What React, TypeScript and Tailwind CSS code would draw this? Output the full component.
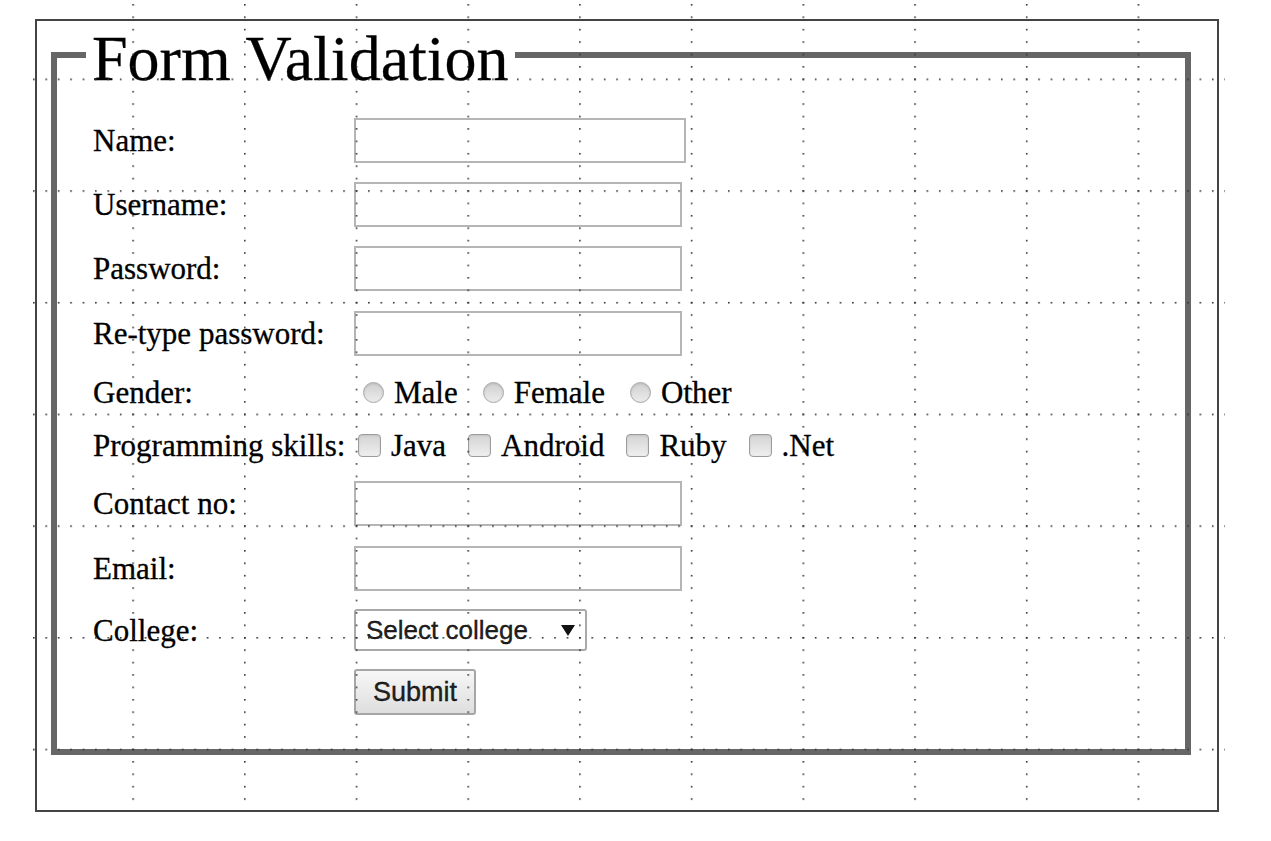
import type { ReactNode } from "react";

function Row({ label, h, children }: { label?: string; h: string; children: ReactNode }) {
  return (
    <div className={`flex items-center ${h}`}>
      <div className="w-[261px] shrink-0 text-[31px] leading-[35px]">{label}</div>
      <div className="flex items-center">{children}</div>
    </div>
  );
}

function TextBox({ wide }: { wide?: boolean }) {
  return (
    <input
      type="text"
      className={`${wide ? "w-[332px]" : "w-[328px]"} h-[45px] border-2 border-[#b5b5b5] bg-white outline-none`}
    />
  );
}

function Radio({ label, first }: { label: string; first?: boolean }) {
  return (
    <label className={`flex items-center ${first ? "ml-[9px]" : "ml-[25px]"}`}>
      <input
        type="radio"
        name="gender"
        className="appearance-none w-[21px] h-[21px] rounded-full border border-[#a8a8a8] bg-gradient-to-b from-[#cfcfcf] to-[#ececec] shadow-[inset_0_1px_2px_#bbb]"
      />
      <span className="ml-[10px] text-[31px] leading-[35px]">{label}</span>
    </label>
  );
}

function Check({ label, first }: { label: string; first?: boolean }) {
  return (
    <label className={`flex items-center ${first ? "ml-[4px]" : "ml-[22px]"}`}>
      <input
        type="checkbox"
        className="appearance-none w-[23px] h-[23px] rounded-[4px] border border-[#9c9c9c] bg-gradient-to-b from-[#d4d4d4] to-[#efefef] shadow-[inset_0_1px_2px_#c4c4c4]"
      />
      <span className="ml-[10px] text-[31px] leading-[35px]">{label}</span>
    </label>
  );
}

export default function App() {
  return (
    <div className="relative min-h-screen bg-white pl-[35px] pt-[19px] font-['Liberation_Serif',serif] text-black [-webkit-text-stroke:0.3px_#000]">
      <div className="w-[1184px] h-[793px] border-2 border-[#444]">
        <form>
          <fieldset className="ml-[14px] mt-[1px] w-[1140px] border-[6px] border-[#666] pl-[29px] pt-[20px] pb-[25px]">
            <legend className="px-[6px] pt-[7px] text-[64px] leading-[59px]">Form Validation</legend>

            <div className="pl-[7px]">
              <Row label="Name:" h="h-[64.4px]">
                <TextBox wide />
              </Row>
              <Row label="Username:" h="h-[64.4px]">
                <TextBox />
              </Row>
              <Row label="Password:" h="h-[64.4px]">
                <TextBox />
              </Row>
              <Row label="Re-type password:" h="h-[64.4px]">
                <TextBox />
              </Row>
              <Row label="Gender:" h="h-[53px]">
                <Radio label="Male" first />
                <Radio label="Female" />
                <Radio label="Other" />
              </Row>
              <Row label="Programming skills:" h="h-[53px]">
                <Check label="Java" first />
                <Check label="Android" />
                <Check label="Ruby" />
                <Check label=".Net" />
              </Row>
              <Row label="Contact no:" h="h-[64.4px]">
                <TextBox />
              </Row>
              <Row label="Email:" h="h-[64.4px]">
                <TextBox />
              </Row>
              <Row label="College:" h="h-[60px]">
                <div className="flex items-center justify-between w-[233px] h-[42px] border-2 border-[#a9a9a9] rounded-[3px] bg-white pl-[10px] pr-[10px] font-['Liberation_Sans',sans-serif] text-[26px] text-[#222]">
                  <span>Select college</span>
                  <svg width="14" height="11" viewBox="0 0 14 11">
                    <polygon points="0,0 14,0 7,11" fill="#111" />
                  </svg>
                </div>
              </Row>
              <Row h="h-[63.6px]">
                <button
                  type="button"
                  className="w-[122px] h-[46px] border-2 border-[#a6a6a6] rounded-[3px] bg-gradient-to-b from-[#f7f7f7] to-[#dedede] font-['Liberation_Sans',sans-serif] text-[27px] text-[#222]"
                >
                  Submit
                </button>
              </Row>
            </div>
          </fieldset>
        </form>
      </div>

      {/* designer grid overlay */}
      <svg
        className="absolute left-[33.4px] top-[3.8px] pointer-events-none"
        width="1192"
        height="806"
      >
        <defs>
          <pattern id="vdots" x="99.3" y="0" width="111.7" height="12.41" patternUnits="userSpaceOnUse">
            <rect width="1.6" height="1.6" fill="#333" />
          </pattern>
          <pattern id="hdots" x="0" y="74.5" width="12.41" height="111.7" patternUnits="userSpaceOnUse">
            <rect width="1.6" height="1.6" fill="#333" />
          </pattern>
        </defs>
        <rect width="1192" height="806" fill="url(#vdots)" />
        <rect width="1192" height="806" fill="url(#hdots)" />
      </svg>
    </div>
  );
}
